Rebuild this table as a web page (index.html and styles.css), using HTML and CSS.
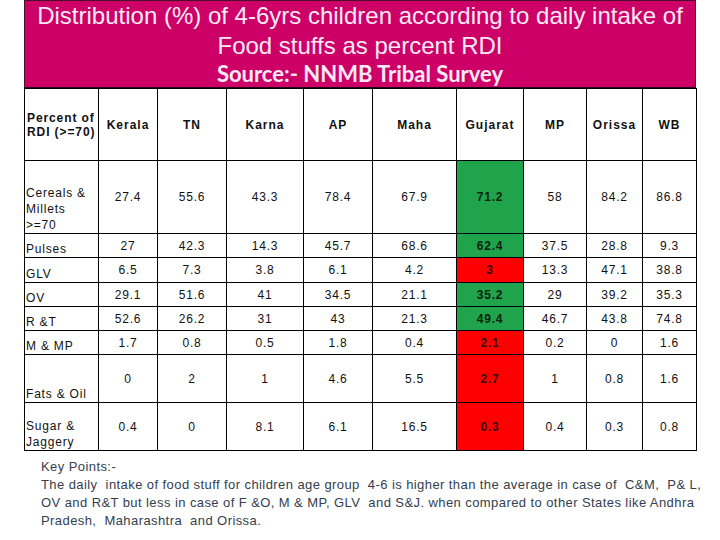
FILE: index.html
```html
<!DOCTYPE html>
<html>
<head>
<meta charset="utf-8">
<link rel="stylesheet" href="styles.css">
</head>
<body>
<div class="slide">
  <div class="banner">
    <div class="title">Distribution (%) of 4-6yrs children according to daily intake of</div>
    <div class="title">Food stuffs as percent RDI</div>
    <div class="source">Source:- NNMB Tribal Survey</div>
  </div>
  <table class="grid">
    <colgroup>
      <col style="width:74px"><col style="width:59px"><col style="width:69px"><col style="width:77px"><col style="width:69px"><col style="width:84px"><col style="width:67px"><col style="width:63px"><col style="width:56px"><col style="width:54px">
    </colgroup>
    <tr class="r-head">
      <th class="lab-head">Percent of<br>RDI (&gt;=70)</th>
      <th>Kerala</th><th>TN</th><th>Karna</th><th>AP</th><th>Maha</th><th>Gujarat</th><th>MP</th><th>Orissa</th><th>WB</th>
    </tr>
    <tr class="r-tall">
      <td class="lab">Cereals &amp;<br>Millets<br>&gt;=70</td>
      <td>27.4</td><td>55.6</td><td>43.3</td><td>78.4</td><td>67.9</td><td class="good">71.2</td><td>58</td><td>84.2</td><td>86.8</td>
    </tr>
    <tr class="r-s">
      <td class="lab">Pulses</td>
      <td>27</td><td>42.3</td><td>14.3</td><td>45.7</td><td>68.6</td><td class="good">62.4</td><td>37.5</td><td>28.8</td><td>9.3</td>
    </tr>
    <tr class="r-s1">
      <td class="lab">GLV</td>
      <td>6.5</td><td>7.3</td><td>3.8</td><td>6.1</td><td>4.2</td><td class="bad">3</td><td>13.3</td><td>47.1</td><td>38.8</td>
    </tr>
    <tr class="r-s">
      <td class="lab">OV</td>
      <td>29.1</td><td>51.6</td><td>41</td><td>34.5</td><td>21.1</td><td class="good">35.2</td><td>29</td><td>39.2</td><td>35.3</td>
    </tr>
    <tr class="r-s">
      <td class="lab">R &amp;T</td>
      <td>52.6</td><td>26.2</td><td>31</td><td>43</td><td>21.3</td><td class="good">49.4</td><td>46.7</td><td>43.8</td><td>74.8</td>
    </tr>
    <tr class="r-s">
      <td class="lab">M &amp; MP</td>
      <td>1.7</td><td>0.8</td><td>0.5</td><td>1.8</td><td>0.4</td><td class="bad">2.1</td><td>0.2</td><td>0</td><td>1.6</td>
    </tr>
    <tr class="r-m">
      <td class="lab">Fats &amp; Oil</td>
      <td>0</td><td>2</td><td>1</td><td>4.6</td><td>5.5</td><td class="bad">2.7</td><td>1</td><td>0.8</td><td>1.6</td>
    </tr>
    <tr class="r-m">
      <td class="lab">Sugar &amp;<br>Jaggery</td>
      <td>0.4</td><td>0</td><td>8.1</td><td>6.1</td><td>16.5</td><td class="bad">0.3</td><td>0.4</td><td>0.3</td><td>0.8</td>
    </tr>
  </table>
  <div class="notes">
    <div>Key Points:-</div>
    <div>The daily&nbsp; intake of food stuff for children age group&nbsp; 4-6 is higher than the average in case of&nbsp; C&amp;M,&nbsp; P&amp; L,</div>
    <div>OV and R&amp;T but less in case of F &amp;O, M &amp; MP, GLV&nbsp; and S&amp;J. when compared to other States like Andhra</div>
    <div>Pradesh,&nbsp; Maharashtra&nbsp; and Orissa.</div>
  </div>
</div>
</body>
</html>
```

FILE: styles.css
```css
html, body {
  margin: 0;
  padding: 0;
  background: #ffffff;
}
.slide {
  width: 720px;
  height: 540px;
  overflow: hidden;
  font-family: "Liberation Sans", Arial, sans-serif;
}
.banner {
  margin-left: 24px;
  width: 670px;
  height: 86px;
  background: #cc0066;
  border: 1px solid #4a1028;
  border-bottom: 1px solid #2a0a18;
  color: #fbeaf6;
  text-align: center;
}
.title {
  font-size: 24px;
  line-height: 30px;
  white-space: nowrap;
}
.title:first-child {
  margin-top: 0;
}
.source {
  font-family: Lato, "Liberation Sans", sans-serif;
  font-weight: 700;
  font-size: 22px;
  line-height: 26px;
}
.grid {
  margin-left: 24px;
  width: 672px;
  table-layout: fixed;
  border-collapse: collapse;
  font-size: 12px;
  letter-spacing: 0.8px;
  color: #111;
}
.grid th, .grid td {
  border: 1px solid #000;
  padding: 0;
  text-align: center;
  vertical-align: middle;
  overflow: hidden;
  white-space: nowrap;
}
.grid th {
  font-weight: 700;
  letter-spacing: 1px;
}
.grid .lab-head {
  text-align: left;
  line-height: 14px;
  padding-left: 2px;
  letter-spacing: 0.9px;
}
.grid .lab {
  text-align: left;
  vertical-align: bottom;
  line-height: 16px;
  padding-left: 1px;
  letter-spacing: 0.8px;
}
.r-head { height: 72px; }
.r-tall { height: 73px; }
.r-s { height: 24px; }
.r-s1 { height: 25px; }
.r-m { height: 48px; }
.grid td.good {
  background: #1fa34b;
  font-weight: 700;
  color: #0e1f10;
}
.grid td.bad {
  background: #fe0000;
  font-weight: 700;
  color: #3a0a0a;
}
.notes {
  margin: 7px 0 0 41px;
  font-size: 13px;
  line-height: 18px;
  letter-spacing: 0.42px;
  color: #34404e;
  white-space: nowrap;
}
```
